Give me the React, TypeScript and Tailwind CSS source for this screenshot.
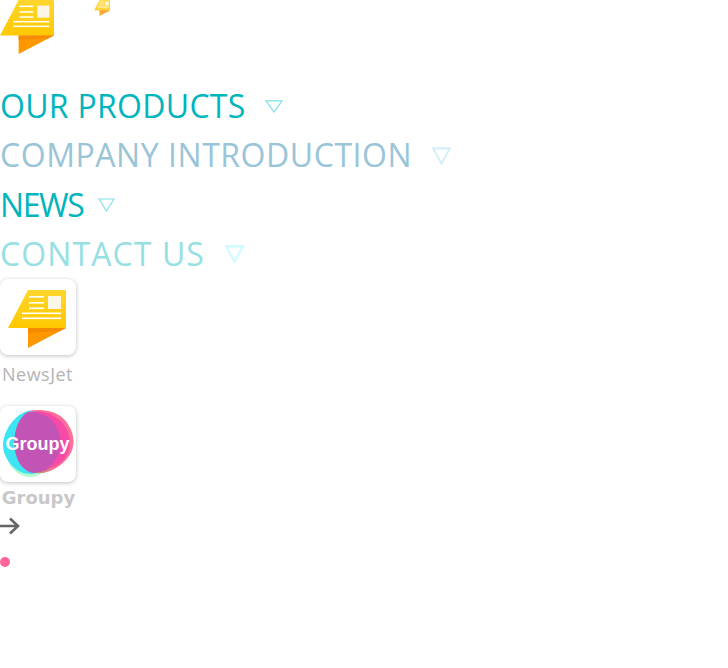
const Logo = ({ className, id }: { className: string; id: string }) => (
    <svg viewBox="0 0 58 58" className={className}>
        <defs>
            <linearGradient id={id} x1="0" y1="0" x2="0" y2="1">
                <stop offset="0" stopColor="#ffd62e" />
                <stop offset="1" stopColor="#ffc800" />
            </linearGradient>
        </defs>
        <polygon points="0,38 20,0 58,0 58,38" fill={`url(#${id})`} />
        <polygon points="20,38 58,38 20,58" fill="#ff9800" />
        <polygon points="20,38 58,38 52,41 20,43" fill="#f58a00" />
        <rect x="40" y="6" width="13" height="13" fill="#fbf6e6" />
        <rect x="21" y="6" width="15" height="1.6" fill="#fff" />
        <rect x="21" y="12" width="15" height="1.6" fill="#fff" />
        <rect x="21" y="17.5" width="15" height="1.6" fill="#fff" />
        <rect x="14" y="22.5" width="39" height="1.6" fill="#fff" />
        <rect x="14" y="27.5" width="39" height="1.6" fill="#fff" />
    </svg>
);

const Triangle = ({ className, stroke, weight }: { className: string; stroke: string; weight: number }) => (
    <svg viewBox="0 0 18 14" className={className} preserveAspectRatio="none">
        <polygon points="1,1 17,1 9,13" fill="none" stroke={stroke} strokeWidth={weight} />
    </svg>
);

const GroupyLogo = () => (
    <svg viewBox="0 0 76 76" className="w-[76px] h-[76px]">
        <ellipse cx="30" cy="44" rx="24" ry="27" fill="#b4f9cf" />
        <path d="M28 5C45 2 62 6 69 20C75 30 75 42 69 50C62 60 50 68 36 67C18 64 12 18 28 5Z" fill="#ff6f96" />
        <path d="M3 39C3 25 15 8 28 5C46 3 50 20 48 40C46 58 42 68 30 68C15 68 3 52 3 39Z" fill="#3de4f2" />
        <path d="M28 6C42 3 58 8 66 22C71 32 71 44 65 52C58 60 46 68 34 66C14 60 12 18 28 6Z" fill="#f64aa8" />
        <path d="M26 7C38 4 52 10 58 24C63 36 60 50 52 58C44 66 34 70 26 64C11 54 10 20 26 7Z" fill="#c254b6" />
        <path d="M36 67C44 66 50 63 55 59C50 65 44 68 36 67Z" fill="#c09a78" />
        <text x="37.5" y="44" textAnchor="middle" fill="#fff" fontSize="18" fontWeight="700" fontFamily="'Liberation Sans', sans-serif">Groupy</text>
    </svg>
);

const menu = [
    { label: "OUR PRODUCTS", text: "text-[#00b5bd] tracking-[0.3px]", gap: "ml-[19px]", tri: "w-[18px] h-[13px]", stroke: "#7fe0e6", weight: 1.2 },
    { label: "COMPANY INTRODUCTION", text: "text-[#9ac5d8] tracking-[0.55px]", gap: "ml-[20px]", tri: "w-[19px] h-[18px]", stroke: "#d3eef9", weight: 1.7 },
    { label: "NEWS", text: "text-[#00b5bd] tracking-[-1.4px]", gap: "ml-[15px]", tri: "w-[17px] h-[14px]", stroke: "#7fe0e6", weight: 1.2 },
    { label: "CONTACT US", text: "text-[#96e0e2] tracking-[1.1px]", gap: "ml-[20px]", tri: "w-[19px] h-[18px]", stroke: "#c9fbff", weight: 1.7 },
];

export default function App() {
    return (
        <div className="w-[728px] h-[668px] overflow-hidden bg-white font-['Open_Sans',sans-serif]">
            <div className="flex items-start h-[82px]">
                <Logo id="logo-big" className="w-[54px] h-[54px]" />
                <Logo id="logo-small" className="w-[16px] h-[16px] ml-[40px] opacity-80" />
            </div>
            <ul>
                {menu.map((item) => (
                    <li key={item.label} className="flex items-center h-[49.25px]">
                        <span className={`text-[32px] leading-[49px] mb-[2px] whitespace-nowrap ${item.text}`}>{item.label}</span>
                        <Triangle className={`${item.gap} ${item.tri}`} stroke={item.stroke} weight={item.weight} />
                    </li>
                ))}
            </ul>
            <div>
                <div className="w-[76px] h-[76px] rounded-lg bg-white shadow-[0_1px_4px_rgba(0,0,0,0.25)] pt-[11px] pl-[8px]">
                    <Logo id="logo-card" className="w-[58px] h-[58px]" />
                </div>
                <p className="w-[75px] mt-[7px] text-center text-[18px] leading-[24px] tracking-[0.5px] text-[#b4b4b4]">NewsJet</p>
            </div>
            <div className="mt-[20px]">
                <div className="w-[76px] h-[76px] rounded-lg bg-white shadow-[0_1px_4px_rgba(0,0,0,0.25)] overflow-hidden">
                    <GroupyLogo />
                </div>
                <p className="w-[77px] mt-[4px] text-center text-[18px] leading-[24px] font-bold text-[#c8c8c8] font-['DejaVu_Sans',sans-serif]">Groupy</p>
            </div>
            <svg viewBox="0 0 20 18" className="w-[20px] h-[18px] mt-[7px]">
                <path d="M0 9H18M10 1.5L18 9L10 16.5" fill="none" stroke="#666" strokeWidth="2.6" />
            </svg>
            <div className="w-[10px] h-[10px] rounded-full bg-[#ff6699] mt-[22px]"></div>
        </div>
    );
}
